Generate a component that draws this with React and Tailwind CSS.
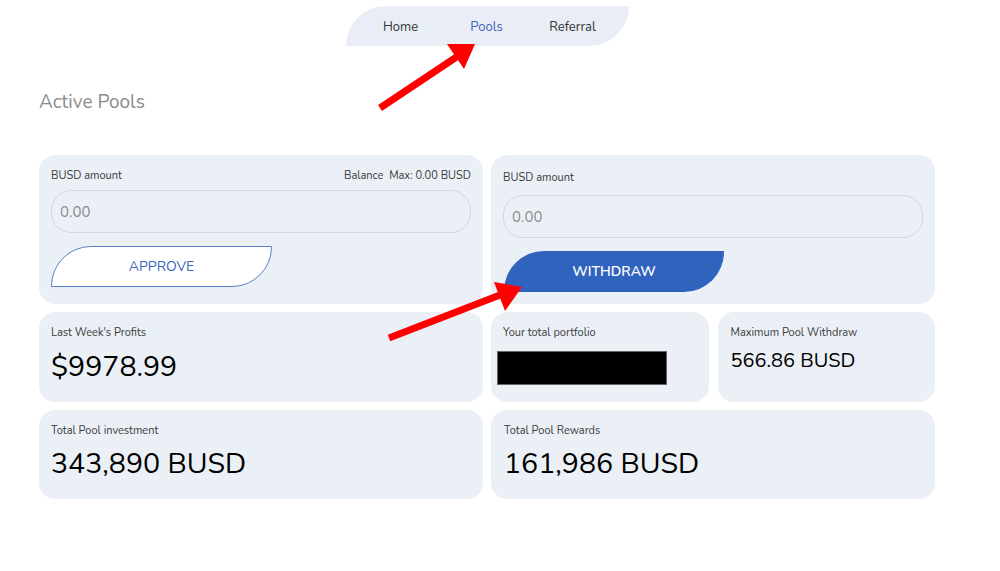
import React from 'react';

const font = "font-['Nunito','Lato',sans-serif]";

// card shell shared by every tile
const Card = ({ className = '', children }) => (
  <div className={`rounded-[16px] bg-[#ebf0f7] ${className}`}>{children}</div>
);

const Label = ({ children, className = '' }) => (
  <div className={`text-[11px] leading-[14px] text-[#3a3a3a] ${className}`}>{children}</div>
);

const AmountInput = () => (
  <input
    type="text"
    placeholder="0.00"
    className="block h-[43px] w-full rounded-[20px] border border-[#d2d7df] bg-transparent pl-[8px] text-[15px] text-[#333] placeholder-[#8c8c8c] outline-none"
  />
);

const Arrows = () => (
  <svg className="pointer-events-none absolute left-0 top-0" width="1000" height="571">
    {/* arrow pointing at Pools */}
    <line x1="380" y1="102" x2="458" y2="50" stroke="#ff0000" strokeWidth="7" />
    <polygon points="447,38 475,38 464,63" fill="#ff0000" />
    {/* arrow pointing at Withdraw */}
    <line x1="389" y1="332" x2="500" y2="289" stroke="#ff0000" strokeWidth="7" />
    <polygon points="494,276 522,281 505,305" fill="#ff0000" />
  </svg>
);

export default function App() {
  return (
    <div className={`relative min-h-[571px] w-[1000px] bg-white ${font}`}>
      <div className="ml-[39px] w-[896px]">
        {/* top nav */}
        <nav className="mx-auto mt-[6px] flex h-[40px] w-[283px] items-center rounded-tl-[40px] rounded-br-[40px] bg-[#e9eef6] pl-[12px] pt-[3px] text-[13px]">
          <a className="w-[86px] text-center text-[#333]">Home</a>
          <a className="w-[86px] text-center text-[#3f63b9]">Pools</a>
          <a className="w-[86px] text-center text-[#333]">Referral</a>
        </nav>

        <h2 className="mt-[44px] text-[19px] leading-[24px] text-[#8b8b8b]">Active Pools</h2>

        <div className="mt-[41px] flex flex-col gap-[8px]">
          {/* deposit / withdraw */}
          <div className="grid grid-cols-2 gap-[8px]">
            <Card className="h-[149px] px-[12px] pt-[14px]">
              <div className="flex justify-between">
                <Label>BUSD amount</Label>
                <Label>Balance&nbsp; Max: 0.00 BUSD</Label>
              </div>
              <div className="mt-[7px]">
                <AmountInput />
              </div>
              <button className="mt-[13px] h-[41px] w-[221px] rounded-tl-[40px] rounded-br-[40px] border border-[#5b80c8] bg-white text-[14px] text-[#3c66c0]">
                APPROVE
              </button>
            </Card>
            <Card className="h-[149px] px-[12px] pt-[16px]">
              <Label>BUSD amount</Label>
              <div className="mt-[10px]">
                <AmountInput />
              </div>
              <button className="mt-[13px] ml-[1px] h-[41px] w-[220px] rounded-tl-[40px] rounded-br-[40px] bg-[#2f63be] text-[14px] font-semibold text-white">
                WITHDRAW
              </button>
            </Card>
          </div>

          {/* stats row */}
          <div className="grid grid-cols-2 gap-[8px]">
            <Card className="h-[90px] px-[12px] pt-[14px]">
              <Label>Last Week's Profits</Label>
              <div className="mt-[10px] text-[28.5px] leading-[34px] text-black">$9978.99</div>
            </Card>
            <div className="grid grid-cols-2 gap-[9px]">
              <Card className="h-[90px] pt-[14px]">
                <Label className="px-[12px]">Your total portfolio</Label>
                <div className="ml-[6px] mt-[11px] h-[34px] w-[170px] border border-[#666] bg-black" />
              </Card>
              <Card className="h-[90px] px-[13px] pt-[14px]">
                <Label>Maximum Pool Withdraw</Label>
                <div className="mt-[8px] text-[20px] leading-[26px] text-black">566.86 BUSD</div>
              </Card>
            </div>
          </div>

          {/* totals */}
          <div className="grid grid-cols-2 gap-[8px]">
            <Card className="h-[89px] px-[12px] pt-[14px]">
              <Label>Total Pool investment</Label>
              <div className="mt-[9px] text-[28.5px] leading-[34px] text-black">343,890 BUSD</div>
            </Card>
            <Card className="h-[89px] px-[13px] pt-[14px]">
              <Label>Total Pool Rewards</Label>
              <div className="mt-[9px] text-[28.5px] leading-[34px] text-black">161,986 BUSD</div>
            </Card>
          </div>
        </div>
      </div>
      <Arrows />
    </div>
  );
}
